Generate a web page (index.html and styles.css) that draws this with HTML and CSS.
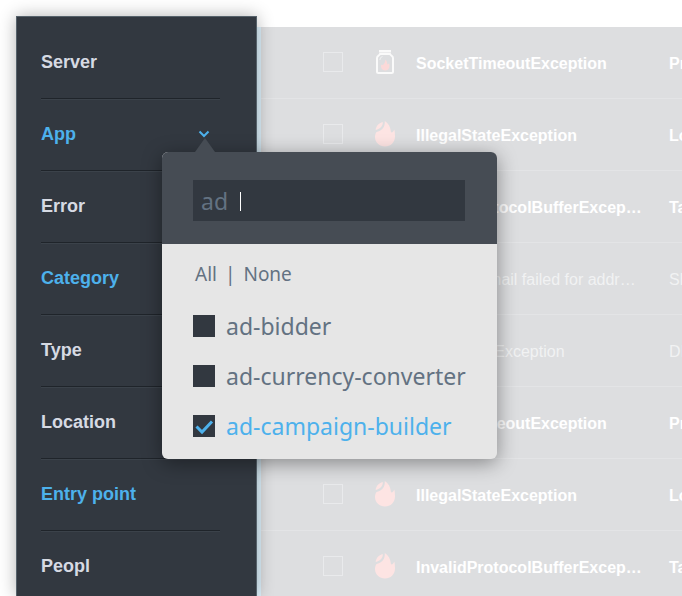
FILE: index.html
```html
<!DOCTYPE html>
<html lang="en">
<head>
<meta charset="utf-8">
<title>Events</title>
<link rel="stylesheet" href="styles.css">
</head>
<body>
<svg class="defs" aria-hidden="true">
  <symbol id="flame" viewBox="0 0 20 26">
    <path d="M9.800 0C13 2 15.300 5.500 15.600 9C15.700 10.500 16 11.500 16.500 11.500C17.800 11.300 18.800 10 19.300 8.500C19.800 10.500 20 13 20 15.500C20 21.500 15.500 25.500 10 25.500C4.500 25.500 0 21.500 0 16C0 14 .5 12.500 1.300 11.200C4.500 10.300 8 8.500 9.300 4.800C9.800 3.200 9.900 1.500 9.800 0Z"/>
    <path d="M7.800 1C8 4.800 5.300 7.800 .7 9C.7 5.500 3.700 2 7.800 1Z"/>
  </symbol>
  <symbol id="jar" viewBox="0 0 20 26">
    <path class="jar-lid" d="M4 1H16V3.500H4Z"/>
    <path class="jar-body" d="M5 5H15C15.500 6.500 18 7 18 9V22.500Q18 24 16.500 24H3.500Q2 24 2 22.500V9C2 7 4.500 6.500 5 5Z"/>
    <path class="jar-shine" d="M4.800 11Q5 8 7.500 7.500"/>
    <path class="jar-flame" d="M10.300 10.500C12 12 12.300 14 12.300 15.500L14 14.500C15.500 18 13.500 21.500 10.200 21.500C7 21.500 5.300 18.500 6.300 15.800L8 16C9.500 14.500 10.300 13 10.300 10.500Z"/>
  </symbol>
</svg>
<main class="page">
  <nav class="sidebar">
    <ul class="filters">
      <li class="filter"><button class="filter-button" type="button">Server</button></li>
      <li class="filter filter-open">
        <button class="filter-button active" type="button">App
          <svg class="chevron" viewBox="0 0 12 8" aria-hidden="true"><path d="M1.500 1.500L6 6L10.500 1.500"/></svg>
        </button>
        <section class="popover">
          <div class="search">
            <input class="search-input" type="text" value="ad" aria-label="Search apps">
            <span class="caret"></span>
          </div>
          <div class="choices">
            <div class="bulk">
              <button class="bulk-button" type="button">All</button>
              <span class="bar">|</span>
              <button class="bulk-button" type="button">None</button>
            </div>
            <label class="choice"><input class="tick" type="checkbox">ad-bidder</label>
            <label class="choice"><input class="tick" type="checkbox">ad-currency-converter</label>
            <label class="choice chosen">
              <span class="tick-wrap"><input class="tick" type="checkbox" checked><svg class="tick-mark" viewBox="0 0 22 22" aria-hidden="true"><path d="M3.500 11.500L9 17L19 6.500"/></svg></span>ad-campaign-builder</label>
          </div>
        </section>
      </li>
      <li class="filter"><button class="filter-button" type="button">Error</button></li>
      <li class="filter"><button class="filter-button active" type="button">Category</button></li>
      <li class="filter"><button class="filter-button" type="button">Type</button></li>
      <li class="filter"><button class="filter-button" type="button">Location</button></li>
      <li class="filter"><button class="filter-button active" type="button">Entry point</button></li>
      <li class="filter"><button class="filter-button" type="button">Peopl</button></li>
    </ul>
  </nav>
  <div class="events">
    <table class="table">
      <colgroup><col class="col-check"><col class="col-icon"><col class="col-name"><col></colgroup>
      <tbody>
        <tr><td class="check-cell"><input class="box" type="checkbox" aria-label="Select row"></td><td class="icon-cell"><svg class="icon"><use href="#jar"/></svg></td><td>SocketTimeoutException</td><td>Pr</td></tr>
        <tr><td class="check-cell"><input class="box" type="checkbox" aria-label="Select row"></td><td class="icon-cell"><svg class="icon"><use href="#flame"/></svg></td><td>IllegalStateException</td><td>Lo</td></tr>
        <tr><td class="check-cell"><input class="box" type="checkbox" aria-label="Select row"></td><td class="icon-cell"><svg class="icon"><use href="#flame"/></svg></td><td>InvalidProtocolBufferExcep…</td><td>Ta</td></tr>
        <tr class="read"><td class="check-cell"><input class="box" type="checkbox" aria-label="Select row"></td><td class="icon-cell"><svg class="icon"><use href="#flame"/></svg></td><td>Sending email failed for addr…</td><td>Sh</td></tr>
        <tr class="read"><td class="check-cell"><input class="box" type="checkbox" aria-label="Select row"></td><td class="icon-cell"><svg class="icon"><use href="#flame"/></svg></td><td>NullPointerException</td><td>DI</td></tr>
        <tr><td class="check-cell"><input class="box" type="checkbox" aria-label="Select row"></td><td class="icon-cell"><svg class="icon"><use href="#jar"/></svg></td><td>SocketTimeoutException</td><td>Pr</td></tr>
        <tr><td class="check-cell"><input class="box" type="checkbox" aria-label="Select row"></td><td class="icon-cell"><svg class="icon"><use href="#flame"/></svg></td><td>IllegalStateException</td><td>Lo</td></tr>
        <tr><td class="check-cell"><input class="box" type="checkbox" aria-label="Select row"></td><td class="icon-cell"><svg class="icon"><use href="#flame"/></svg></td><td>InvalidProtocolBufferExcep…</td><td>Ta</td></tr>
      </tbody>
    </table>
  </div>
</main>
</body>
</html>
```

FILE: styles.css
```css
* { box-sizing: border-box; }

body {
  margin: 0;
  background: #fff;
  font-family: "Liberation Sans", Arial, sans-serif;
}

button, input { font: inherit; }

.defs { position: absolute; width: 0; height: 0; }

.page {
  display: flex;
  height: 100vh;
  padding: 16px 0 0 16px;
  overflow: hidden;
}

/* Filter sidebar */
.sidebar {
  position: relative;
  z-index: 1;
  flex: 0 0 241px;
  padding: 10px 36px 0 24px;
  border: 1px solid #56626b;
  border-width: 1px 1px 0;
  background: #323840;
  box-shadow: 0 0 16px rgba(0, 0, 0, 0.3);
}

.filters { margin: 0; padding: 0; list-style: none; }

.filter {
  border-bottom: 1px solid #1f242a;
  box-shadow: 0 1px 0 #3b424a;
}

.filter-open { position: relative; z-index: 2; }

.filter-button {
  display: flex;
  align-items: center;
  justify-content: space-between;
  width: 100%;
  padding: 23px 10px 24px 0;
  border: 0;
  background: none;
  color: #d6dae3;
  font-size: 18px;
  font-weight: bold;
  line-height: 24px;
  text-align: left;
}

.filter-button.active { color: #4db1ec; }

.chevron { width: 12px; height: 8px; }

.chevron path { fill: none; stroke: #4db1ec; stroke-width: 2; }

/* App picker */
.popover {
  position: absolute;
  top: 53px;
  left: 121px;
  width: 335px;
  border-radius: 6px;
  background: #e6e6e6;
  box-shadow: 0 4px 20px rgba(0, 0, 0, 0.4);
  font-family: "Noto Sans", sans-serif;
  color: #637282;
}

.popover::before {
  content: "";
  position: absolute;
  top: -14px;
  left: 33px;
  border: 10px solid transparent;
  border-top-width: 0;
  border-bottom: 14px solid #464c54;
}

.search {
  position: relative;
  padding: 28px 32px 23px 31px;
  border-radius: 6px 6px 0 0;
  background: #464c54;
}

.search-input {
  display: block;
  width: 100%;
  height: 41px;
  padding: 0 8px;
  border: 0;
  background: #323840;
  color: #637282;
  font-size: 23px;
}

.caret {
  position: absolute;
  top: 40px;
  left: 78px;
  width: 1px;
  height: 19px;
  background: #fff;
}

.choices { padding: 16px 28px 8px 31px; }

.bulk {
  display: flex;
  gap: 8px;
  margin-bottom: 13px;
  padding-left: 2px;
  font-size: 19px;
  line-height: 28px;
}

.bulk-button { padding: 0; border: 0; background: none; color: inherit; }

.choice {
  display: flex;
  align-items: center;
  gap: 11px;
  height: 50px;
  font-size: 23px;
  white-space: nowrap;
}

.chosen { color: #4db1ec; }

.tick {
  display: block;
  flex: none;
  width: 22px;
  height: 22px;
  margin: 0;
  appearance: none;
  background: #323840;
}

.tick-wrap { position: relative; }

.tick-mark { position: absolute; inset: 0; }

.tick-mark path { fill: none; stroke: #4db1ec; stroke-width: 3; }

/* Event list */
.events {
  flex: 1;
  min-width: 0;
  margin-top: 11px;
  overflow: hidden;
  border-left: 4px solid #dcf0fb;
  background: #dddee0;
}

.table {
  width: 100%;
  border-collapse: separate;
  border-spacing: 0;
  table-layout: fixed;
  color: #fff;
  font-size: 16px;
  font-weight: bold;
}

.col-check { width: 114px; }
.col-icon { width: 41px; }
.col-name { width: 253px; }

.table td {
  height: 72px;
  padding: 2px 0 0;
  border-bottom: 1px solid #e3e4e6;
  white-space: nowrap;
}

.table .check-cell { padding: 0 0 2px 62px; }
.table .icon-cell { padding: 0 0 2px; }

.table .read { color: #f1f2f3; font-weight: normal; }

.box {
  display: block;
  width: 20px;
  height: 20px;
  margin: 0;
  appearance: none;
  border: 1px solid #e9eaec;
}

.icon { display: block; width: 20px; height: 26px; fill: #fde4e3; }

.jar-lid { fill: #fafafa; }
.jar-body { fill: none; stroke: #fafafa; stroke-width: 2; }
.jar-shine { fill: none; stroke: #f1f2f3; stroke-width: 1; }
.jar-flame { fill: #fbd9d8; }
```
